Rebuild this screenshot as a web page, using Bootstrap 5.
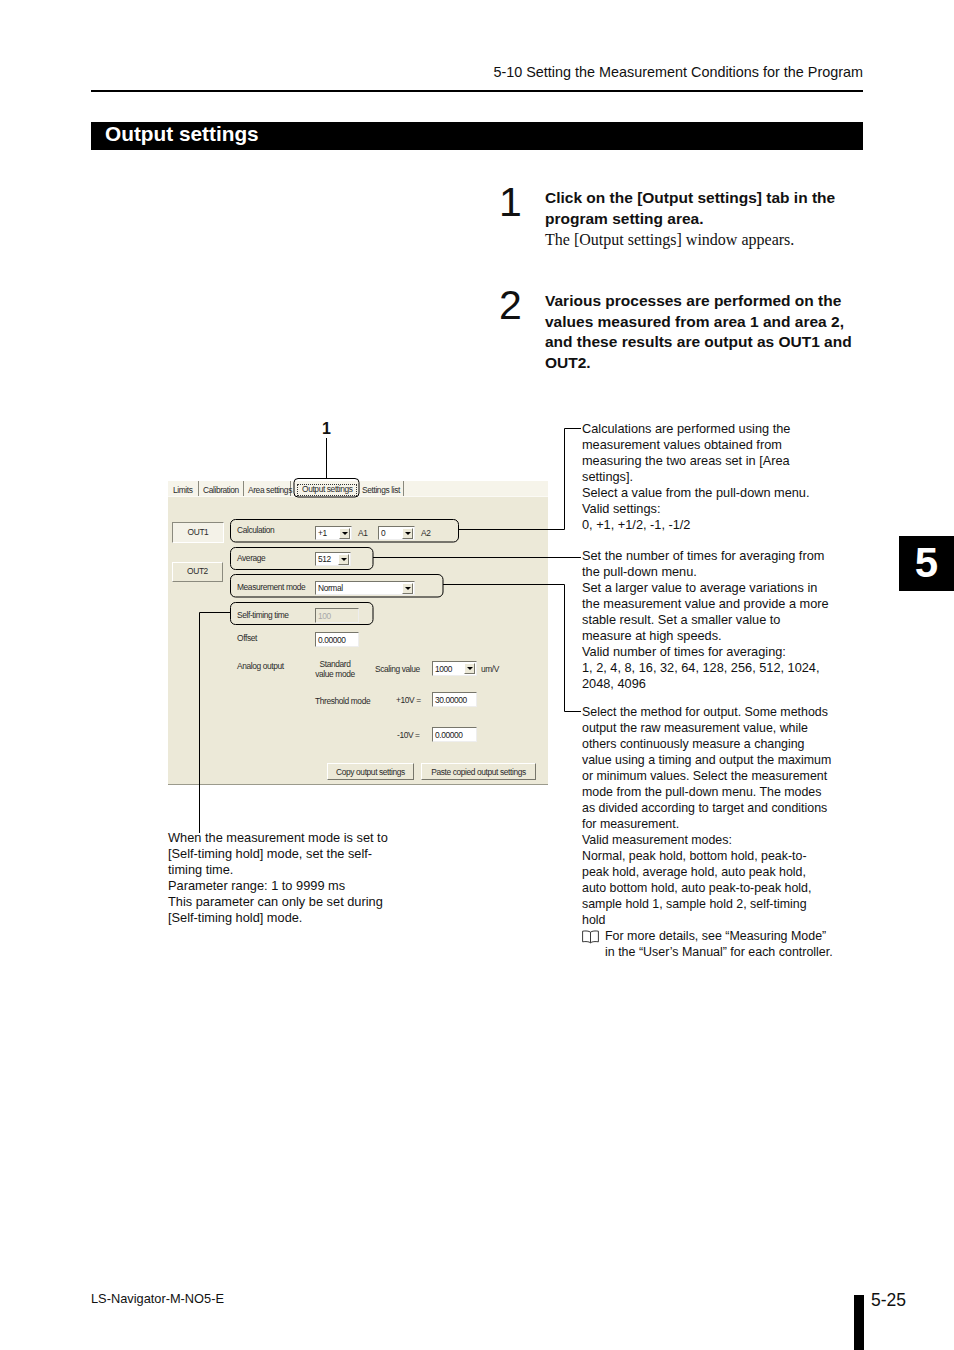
<!DOCTYPE html>
<html lang="en"><head><meta charset="utf-8"><title>Output settings</title>
<link rel="stylesheet" href="https://cdn.jsdelivr.net/npm/bootstrap@5.3.0/dist/css/bootstrap.min.css">
<style>
html,body{margin:0;background:#fff}
body{font-family:"Liberation Sans",Arial,sans-serif;color:#111}
.sheet{position:relative;width:954px;height:1350px;overflow:hidden}
.runhead{margin:63px 91px 0;width:772px;height:29px;border-bottom:2px solid #000;font-size:14.4px;line-height:18px;text-align:right}
.titlebar{margin:30px 91px 0;width:772px;height:28px;background:#000;color:#fff;font-weight:700;font-size:20.8px;line-height:24px;padding-left:14px}
.stepone{margin-top:27px;padding-left:499px;height:103px}
.steptwo{padding-left:499px;height:140px}
.stepnum{width:46px;font-family:"Liberation Sans",sans-serif;font-weight:400;font-size:41px;line-height:50px;flex:none}
.stepbody{width:318px;font-size:15.5px;line-height:20.7px;font-weight:700;padding-top:11px}
.stepnote{font-family:"Liberation Serif",serif;font-weight:400;font-size:16px;margin-top:1px}
.dgm{position:relative;height:560px;padding-left:168px}
.wires{position:absolute;left:0;top:0;width:954px;height:560px;pointer-events:none}
.leftpart{width:414px;flex:none}
.calloutnum{font-weight:700;font-size:16px;line-height:18px;margin-left:154px;height:61px}
.shot{width:380px;height:304px;background:#ece9d8;border-bottom:1px solid #9b9a8c;font-size:8.4px;letter-spacing:-.38px;line-height:10px;color:#2b2b2b}
.tabstrip{height:16px;background:#f6f4ea;border-bottom:1px solid #fbfaf5;padding-left:1px}
.tabcell{height:15px;line-height:19px;padding-left:4px;border-right:1px solid #8a897d;white-space:nowrap}
.tabcell.w1{width:30px}.tabcell.w2{width:45px}.tabcell.w3{width:47px}.tabcell.w4{width:66px;border:0;padding:0}.tabcell.w5{width:47px;padding-left:5px}
.focusbox{border:1px dotted #333;height:12px;line-height:9px;margin:3px 0 0 6px;padding:0 4px;width:60px}
.shotbody{height:287px}
.sidecol{width:52px;margin-left:4px;padding-top:25px;flex:none}
.outbtn{height:21px;text-align:center;line-height:18px;background:#ece9d8;border:1px solid;border-color:#fff #8b8a7e #8b8a7e #fff}
.outbtn.on{width:52px;border-color:#8b8a7e #fff #fff #8b8a7e;background:#f4f2e8}
.outbtn.off{width:51px;height:20px;line-height:17px;margin-top:19px}
.formcol{margin-left:13px;padding-top:29px;flex:1}
.rw{display:flex;align-items:center;height:14px;white-space:nowrap}
.rw.h15{height:15px}
.lab{width:78px;flex:none;padding-bottom:2px}
.lab.up3{padding-bottom:6px}
.lab.up2{padding-bottom:4px}
.combo,.inbox{background:#fff;border:1px solid;border-color:#77766b #eee #eee #77766b;height:100%;display:flex;align-items:center;padding-left:2px;color:#222;flex:none}
.combo{justify-content:space-between;padding-right:1px}
.cw37{width:37px}.cw36{width:36px}.cw100{width:100px}.cw45{width:45px}.cw44{width:44px}
.arrowbtn{width:11px;height:11px;background:#ece9d8;border:1px solid;border-color:#fff #77766b #77766b #fff;display:flex;align-items:center;justify-content:center}
.arrowbtn i{display:block;width:0;height:0;border:3px solid transparent;border-top:3px solid #000;border-bottom:0}
.inbox.off{background:#ece9d8;color:#aaa}
.m12{margin-top:12px}.m15{margin-top:15px}.m13{margin-top:13px}.m9{margin-top:9px}.m14{margin-top:14px}.m16{margin-top:16px}.m20{margin-top:20px}
.a1{width:26px;padding-left:6px;flex:none}
.std{flex:none;text-align:center;width:40px;margin-right:20px;line-height:10px;padding-top:1px}
.scl{width:57px;flex:none}
.unit{margin-left:4px}
.thr{width:81px;flex:none;padding-top:2px}
.plus{width:36px;flex:none}
.minus{width:35px;flex:none;margin-left:160px}
.btnrow{margin:21px 12px 0 0;height:17px;justify-content:flex-end;gap:7px}
.winbtn{height:17px;line-height:16px;text-align:center;border:1px solid;border-color:#fff #77766b #77766b #fff;background:#ece9d8}
.winbtn.b1{width:87px}.winbtn.b2{width:115px}
.lowernote{margin-top:45px;width:232px;font-size:12.8px;line-height:16px}
.rightpart{width:262px;line-height:16px;padding-top:1px;flex:none}
.wider{font-size:12.75px}.tighter{font-size:12.4px}
.gap1{margin-top:15px}.gap2{margin-top:12px}
.booknote{display:flex;font-size:12.45px}
.booknote svg{width:17px;height:14px;margin:2px 6px 0 0;flex:none}
.thumbtab{position:absolute;left:899px;top:536px;width:55px;height:55px;background:#000;color:#fff;font-weight:700;font-size:42px;line-height:53px;text-align:center}
.pagefoot{position:absolute;left:0;right:0;bottom:0;height:55px;padding-left:91px}
.docid{width:763px;font-size:12.8px;line-height:16px;flex:none;margin-top:-4px}
.pagebar{width:10px;height:55px;background:#000;flex:none}
.pageno{margin-left:7px;font-size:17.5px;line-height:20px;margin-top:-5px}
</style></head>
<body>
<div class="sheet">
  <div class="runhead">5-10 Setting the Measurement Conditions for the Program</div>
  <div class="titlebar">Output settings</div>

  <div class="stepone d-flex">
    <div class="stepnum">1</div>
    <div class="stepbody">Click on the [Output settings] tab in the program setting area.<div class="stepnote">The [Output settings] window appears.</div></div>
  </div>
  <div class="steptwo d-flex">
    <div class="stepnum">2</div>
    <div class="stepbody">Various processes are performed on the values measured from area 1 and area 2, and these results are output as OUT1 and OUT2.</div>
  </div>

  <div class="dgm d-flex">
    <div class="leftpart">
      <div class="calloutnum">1</div>
      <div class="shot">
        <div class="tabstrip d-flex">
          <div class="tabcell w1">Limits</div><div class="tabcell w2">Calibration</div><div class="tabcell w3">Area settings</div>
          <div class="tabcell w4"><div class="focusbox">Output settings</div></div><div class="tabcell w5">Settings list</div>
        </div>
        <div class="shotbody d-flex">
          <div class="sidecol">
            <div class="outbtn on">OUT1</div>
            <div class="outbtn off">OUT2</div>
          </div>
          <div class="formcol">
            <div class="rw"><div class="lab up3">Calculation</div><div class="combo cw37">+1<span class="arrowbtn"><i></i></span></div><div class="a1">A1</div><div class="combo cw37">0<span class="arrowbtn"><i></i></span></div><div class="a1">A2</div></div>
            <div class="rw m12"><div class="lab">Average</div><div class="combo cw36">512<span class="arrowbtn"><i></i></span></div></div>
            <div class="rw m15"><div class="lab">Measurement mode</div><div class="combo cw100">Normal<span class="arrowbtn"><i></i></span></div></div>
            <div class="rw h15 m13"><div class="lab">Self-timing time</div><div class="inbox off cw44">100</div></div>
            <div class="rw h15 m9"><div class="lab up2">Offset</div><div class="inbox cw44">0.00000</div></div>
            <div class="rw h15 m14"><div class="lab up3">Analog output</div><div class="std">Standard<br>value mode</div><div class="scl">Scaling value</div><div class="combo cw45">1000<span class="arrowbtn"><i></i></span></div><div class="unit">um/V</div></div>
            <div class="rw h15 m16"><div class="lab"></div><div class="thr">Threshold mode</div><div class="plus">+10V =</div><div class="inbox cw45">30.00000</div></div>
            <div class="rw h15 m20"><div class="minus">-10V =</div><div class="inbox cw45">0.00000</div></div>
            <div class="d-flex btnrow"><div class="winbtn b1">Copy output settings</div><div class="winbtn b2">Paste copied output settings</div></div>
          </div>
        </div>
      </div>
      <div class="lowernote">When the measurement mode is set to<br>[Self-timing hold] mode, set the self-<br>timing time.<br>Parameter range: 1 to 9999 ms<br>This parameter can only be set during<br>[Self-timing hold] mode.</div>
    </div>
    <div class="rightpart">
      <div class="wider">Calculations are performed using the<br>measurement values obtained from<br>measuring the two areas set in [Area<br>settings].<br>Select a value from the pull-down menu.<br>Valid settings:<br>0, +1, +1/2, -1, -1/2</div>
      <div class="gap1 wider">Set the number of times for averaging from<br>the pull-down menu.<br>Set a larger value to average variations in<br>the measurement value and provide a more<br>stable result. Set a smaller value to<br>measure at high speeds.<br>Valid number of times for averaging:<br>1, 2, 4, 8, 16, 32, 64, 128, 256, 512, 1024,<br>2048, 4096</div>
      <div class="gap2 tighter">Select the method for output. Some methods<br>output the raw measurement value, while<br>others continuously measure a changing<br>value using a timing and output the maximum<br>or minimum values. Select the measurement<br>mode from the pull-down menu. The modes<br>as divided according to target and conditions<br>for measurement.<br>Valid measurement modes:<br>Normal, peak hold, bottom hold, peak-to-<br>peak hold, average hold, auto peak hold,<br>auto bottom hold, auto peak-to-peak hold,<br>sample hold 1, sample hold 2, self-timing<br>hold</div>
      <div class="booknote">
        <svg viewBox="0 0 17 14" fill="none" stroke="#222" stroke-width="0.9"><path d="M8.500 2.200C7 .9 3.500.7.600 1.200v10.600c3-.5 6.400-.3 7.900 1 1.500-1.300 4.900-1.500 7.900-1V1.200C13.500.7 10 .9 8.500 2.200zM8.500 2.200v10.600"/></svg>
        <div>For more details, see “Measuring Mode”<br>in the “User’s Manual” for each controller.</div>
      </div>
    </div>
    <svg class="wires" viewBox="0 420 954 560" fill="none" stroke="#000" stroke-width="1">
      <path d="M326.500 438v40"/>
      <rect x="294" y="478.500" width="65" height="18.500" rx="4"/>
      <rect x="230.500" y="519.500" width="228" height="22.500" rx="5"/>
      <rect x="230.500" y="547.500" width="142.500" height="22" rx="5"/>
      <rect x="230.500" y="574.500" width="212.500" height="22.500" rx="5"/>
      <rect x="230.500" y="602.500" width="142.500" height="22" rx="5"/>
      <path d="M459 529.500h105.500V428.500H581"/>
      <path d="M373 557.500h208"/>
      <path d="M443 584.500h121.500V711.500H581"/>
      <path d="M230 612.500h-30.500V833"/>
    </svg>
  </div>

  <div class="thumbtab">5</div>
  <div class="pagefoot d-flex">
    <div class="docid">LS-Navigator-M-NO5-E</div>
    <div class="pagebar"></div>
    <div class="pageno">5-25</div>
  </div>
</div>
<script src="https://cdn.jsdelivr.net/npm/bootstrap@5.3.0/dist/js/bootstrap.bundle.min.js"></script>
</body></html>
